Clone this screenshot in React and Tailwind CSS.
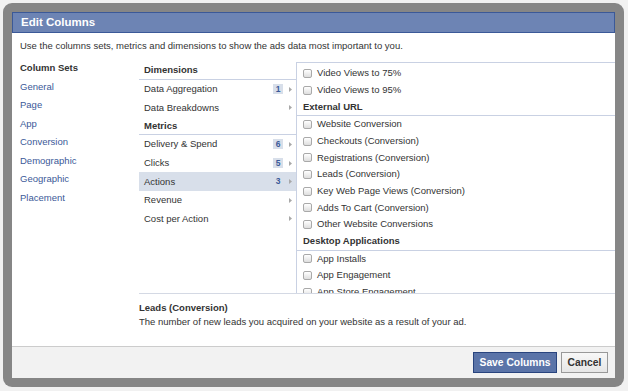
const columnSets = ['General', 'Page', 'App', 'Conversion', 'Demographic', 'Geographic', 'Placement'];

const groups = [
  {
    title: 'Dimensions',
    items: [
      { label: 'Data Aggregation', count: 1 },
      { label: 'Data Breakdowns' },
    ],
  },
  {
    title: 'Metrics',
    items: [
      { label: 'Delivery & Spend', count: 6 },
      { label: 'Clicks', count: 5 },
      { label: 'Actions', count: 3, active: true },
      { label: 'Revenue' },
      { label: 'Cost per Action' },
    ],
  },
];

const fields = [
  { type: 'item', label: 'Video Views to 75%' },
  { type: 'item', label: 'Video Views to 95%' },
  { type: 'header', label: 'External URL' },
  { type: 'item', label: 'Website Conversion' },
  { type: 'item', label: 'Checkouts (Conversion)' },
  { type: 'item', label: 'Registrations (Conversion)' },
  { type: 'item', label: 'Leads (Conversion)' },
  { type: 'item', label: 'Key Web Page Views (Conversion)' },
  { type: 'item', label: 'Adds To Cart (Conversion)' },
  { type: 'item', label: 'Other Website Conversions' },
  { type: 'header', label: 'Desktop Applications' },
  { type: 'item', label: 'App Installs' },
  { type: 'item', label: 'App Engagement' },
  { type: 'item', label: 'App Store Engagement' },
];

const Arrow = () => (
  <svg width="3" height="5" viewBox="0 0 3 5" className="shrink-0">
    <polygon points="0,0 3,2.5 0,5" fill="#a8a8a8" />
  </svg>
);

const Checkbox = () => (
  <span className="w-[9px] h-[9px] shrink-0 rounded-[2px] border border-[#a9a9a9] bg-gradient-to-b from-white to-[#dedede]" />
);

export default function App() {
  return (
    <div className="w-[628px] h-[391px] bg-[#f1f1f1] pt-[3px] pl-[3px] font-['Liberation_Sans',Arial,sans-serif] text-[9.5px] text-[#333]">
      <div className="w-[621px] h-[384px] rounded-[9px] bg-[#868686] p-[9px]">
        <div className="w-[603px] h-[366px] bg-white flex flex-col">
          {/* Title bar */}
          <div className="h-[21px] shrink-0 bg-[#6d84b4] border border-[#3b5998] flex items-center pl-[8px]">
            <span className="text-[11.5px] font-bold text-white">Edit Columns</span>
          </div>

          <div className="h-[26px] shrink-0 flex items-center pl-[8px]">
            Use the columns sets, metrics and dimensions to show the ads data most important to you.
          </div>

          <div className="flex flex-1 min-h-0">
            {/* Column sets */}
            <div className="w-[127px] shrink-0 pl-[8px]">
              <div className="h-[18.5px] flex items-center font-bold">Column Sets</div>
              {columnSets.map((s) => (
                <div key={s} className="h-[18.5px] flex items-center text-[#3b5998]">
                  {s}
                </div>
              ))}
            </div>

            <div className="flex-1 flex flex-col min-w-0">
              <div className="mt-[3px] h-[232px] shrink-0 flex border-b border-[#d4d9e4]">
                {/* Categories */}
                <div className="w-[157px] shrink-0">
                  {groups.map((g) => (
                    <div key={g.title}>
                      <div className="h-[18px] flex items-center pl-[5px] font-bold border-b border-[#c9d1e3]">
                        {g.title}
                      </div>
                      {g.items.map((it) => (
                        <div
                          key={it.label}
                          className={`h-[18.6px] flex items-center pl-[5px] pr-[4px] ${it.active ? 'bg-[#d8dfea]' : ''}`}
                        >
                          <span className="flex-1">{it.label}</span>
                          {it.count && (
                            <span className="w-[10px] h-[10px] mr-[6px] flex items-center justify-center bg-[#d8dfea] text-[#3b5998] font-bold text-[8.5px]">
                              {it.count}
                            </span>
                          )}
                          <Arrow />
                        </div>
                      ))}
                    </div>
                  ))}
                </div>

                {/* Fields */}
                <div className="flex-1 border-l border-t border-[#c9d1e3] overflow-hidden pt-[2px]">
                  {fields.map((f) =>
                    f.type === 'header' ? (
                      <div key={f.label} className="h-[17.7px] flex items-center pl-[6px] font-bold border-b border-[#c9d1e3]">
                        {f.label}
                      </div>
                    ) : (
                      <div key={f.label} className="h-[16.7px] flex items-center gap-[5px] pl-[6px]">
                        <Checkbox />
                        <span>{f.label}</span>
                      </div>
                    )
                  )}
                </div>
              </div>

              <div className="pt-[7px] leading-[13.5px]">
                <div className="font-bold">Leads (Conversion)</div>
                <div>The number of new leads you acquired on your website as a result of your ad.</div>
              </div>
            </div>
          </div>

          {/* Footer */}
          <div className="h-[32px] shrink-0 bg-[#f2f2f2] border-t border-[#cccccc] flex items-center justify-end gap-[4px] pr-[7px]">
            <button className="w-[84px] h-[21px] bg-[#5b74a8] border border-[#29447e] text-white font-bold text-[10.3px]">
              Save Columns
            </button>
            <button className="w-[47px] h-[21px] bg-gradient-to-b from-[#f8f8f8] to-[#e6e6e6] border border-[#999] text-[#333] font-bold text-[10.3px]">
              Cancel
            </button>
          </div>
        </div>
      </div>
    </div>
  );
}
